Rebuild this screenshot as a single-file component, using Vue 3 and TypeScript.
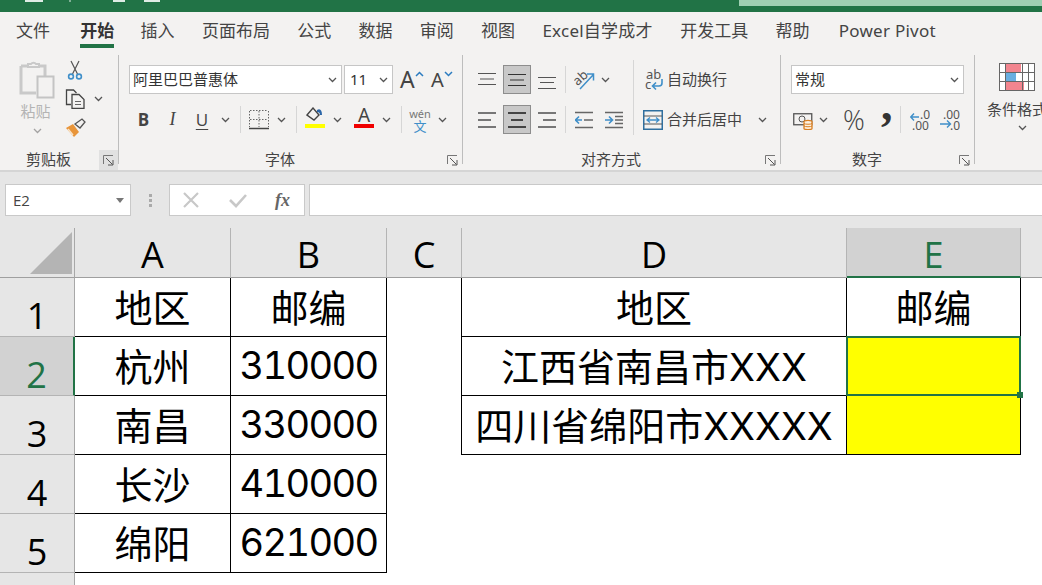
<script setup lang="ts">
type Cell = { text?: string; cls?: string }

const tabs = ['文件', '开始', '插入', '页面布局', '公式', '数据', '审阅', '视图', 'Excel自学成才', '开发工具', '帮助', 'Power Pivot']

const columns = [
  { name: 'A', width: 156 },
  { name: 'B', width: 156 },
  { name: 'C', width: 75 },
  { name: 'D', width: 385 },
  { name: 'E', width: 174 },
]

const b = 'line'
const n = 'line num'
const rows: { no: number; cells: Cell[] }[] = [
  { no: 1, cells: [{ text: '地区', cls: b }, { text: '邮编', cls: b }, { cls: 'edge' }, { text: '地区', cls: b }, { text: '邮编', cls: b }] },
  { no: 2, cells: [{ text: '杭州', cls: b }, { text: '310000', cls: n }, { cls: 'edge' }, { text: '江西省南昌市XXX', cls: b }, { cls: 'line fill picked' }] },
  { no: 3, cells: [{ text: '南昌', cls: b }, { text: '330000', cls: n }, { cls: 'edge' }, { text: '四川省绵阳市XXXXX', cls: b }, { cls: 'line fill' }] },
  { no: 4, cells: [{ text: '长沙', cls: b }, { text: '410000', cls: n }, {}, {}, {}] },
  { no: 5, cells: [{ text: '绵阳', cls: b }, { text: '621000', cls: n }, {}, {}, {}] },
]

const gridColumns = ['75px', ...columns.map((c) => c.width + 'px'), '1fr'].join(' ')
</script>

<template>
  <div class="app">
    <svg width="0" height="0" class="defs">
      <symbol id="chev" viewBox="0 0 9 6"><path d="M1 1l3.5 3.5L8 1" fill="none" stroke="#555" stroke-width="1.3" /></symbol>
      <symbol id="launch" viewBox="0 0 11 11">
        <path d="M.5 9V.5H10" fill="none" stroke="#777" />
        <path d="M3 3l6.5 6.5M5 10h5V5" fill="none" stroke="#555" />
      </symbol>
    </svg>

    <div class="titlebar">
      <div class="quick"><i class="q1"></i><i class="q2"></i><i class="q3"></i><i class="q4"></i></div>
      <div class="title-search"></div>
    </div>

    <nav class="tabs">
      <span v-for="t in tabs" :key="t" class="tab" :class="{ active: t === '开始', latin: /^[A-Z]/.test(t) }">{{ t }}</span>
    </nav>

    <div class="ribbon">
      <!-- clipboard -->
      <section class="group g-clip">
        <div class="body clip-body">
          <div class="paste">
            <svg width="36" height="39" viewBox="0 0 36 39">
              <path d="M2 6h7M20 6h6v10M2 6v27h15" fill="none" stroke="#c9c9c9" stroke-width="3" />
              <path d="M9 7V4h3a3 3 0 0 1 5 0h3v3z" fill="#f3f2f1" stroke="#c9c9c9" stroke-width="2" />
              <rect x="18.5" y="16.5" width="16" height="21" fill="#f3f2f1" stroke="#c4c4c4" stroke-width="2" />
            </svg>
            <span class="paste-label">粘贴</span>
            <svg class="paste-chev" width="9" height="6"><use href="#chev" /></svg>
          </div>
          <div class="clip-tools">
            <svg width="20" height="20" viewBox="0 0 20 20">
              <path d="M6 1l6.5 13M14 1L7.500 14" fill="none" stroke="#555" stroke-width="1.2" />
              <circle cx="6" cy="16.500" r="2.400" fill="none" stroke="#3f8fc9" stroke-width="1.600" />
              <circle cx="14" cy="16.500" r="2.400" fill="none" stroke="#3f8fc9" stroke-width="1.600" />
            </svg>
            <div class="copy-row">
              <svg width="21" height="20" viewBox="0 0 21 20">
                <path d="M6 15.500H1.500V1h7l3 3" fill="none" stroke="#444" stroke-width="1.300" />
                <path d="M7 5.500h7l5 5v9H7z" fill="#f3f2f1" stroke="#444" stroke-width="1.300" />
                <path d="M10 12.500h6M10 15.500h6" stroke="#666" />
              </svg>
              <svg width="9" height="6"><use href="#chev" /></svg>
            </div>
            <svg width="21" height="20" viewBox="0 0 21 20">
              <path d="M1 10l7-4 6 8-5 5z" fill="#e8953a" />
              <path d="M3 11l5 6" stroke="#f8e3c8" stroke-width="1.500" />
              <path d="M10 6l7-5 3 3-5 6z" fill="#f3f2f1" stroke="#555" stroke-width="1.300" />
            </svg>
          </div>
        </div>
        <div class="label">剪贴板<span class="launcher hot"><svg width="11" height="11"><use href="#launch" /></svg></span></div>
      </section>
      <div class="divider"></div>

      <!-- font -->
      <section class="group g-font">
        <div class="body rows">
          <div class="row">
            <div class="combo font-name"><span>阿里巴巴普惠体</span><svg width="9" height="6"><use href="#chev" /></svg></div>
            <div class="combo font-size"><span>11</span><svg width="9" height="6"><use href="#chev" /></svg></div>
            <span class="grow-a"><b>A</b><svg width="9" height="6" viewBox="0 0 9 6"><path d="M1 5l3.500-3.500L8 5" fill="none" stroke="#2b7cc0" stroke-width="1.500" /></svg></span>
            <span class="shrink-a"><b>A</b><svg width="9" height="6" viewBox="0 0 9 6"><path d="M1 1l3.500 3.500L8 1" fill="none" stroke="#2b7cc0" stroke-width="1.500" /></svg></span>
          </div>
          <div class="row">
            <span class="tool t29 glyph bold">B</span>
            <span class="tool t29 glyph italic">I</span>
            <span class="tool t30 glyph under">U</span>
            <span class="chev"><svg width="9" height="6"><use href="#chev" /></svg></span>
            <i class="sep"></i>
            <span class="tool t28">
              <svg width="20" height="20" viewBox="0 0 20 20">
                <path d="M.5 1v16M10 1v16M19.500 1v16M1 .5h18M1 9.500h18" fill="none" stroke="#666" stroke-dasharray="1.500 1.500" />
                <path d="M0 18.500h20" stroke="#444" stroke-width="1.500" />
              </svg>
            </span>
            <span class="chev"><svg width="9" height="6"><use href="#chev" /></svg></span>
            <i class="sep"></i>
            <span class="tool t28 stack">
              <svg width="20" height="16" viewBox="0 0 20 16">
                <path d="M2 8l6-7 6 7-5 5z" fill="none" stroke="#444" stroke-width="1.400" />
                <path d="M12 3c3-2 5 0 5 5h-2c0-2-1-3-3-3z" fill="#2b66a8" />
              </svg>
              <i class="colorbar yellow"></i>
            </span>
            <span class="chev"><svg width="9" height="6"><use href="#chev" /></svg></span>
            <span class="tool t28 stack ml5">
              <span class="font-a">A</span>
              <i class="colorbar red"></i>
            </span>
            <span class="chev"><svg width="9" height="6"><use href="#chev" /></svg></span>
            <i class="sep"></i>
            <span class="tool t28 wen"><small>wén</small><em>文</em></span>
            <span class="chev"><svg width="9" height="6"><use href="#chev" /></svg></span>
          </div>
        </div>
        <div class="label">字体<span class="launcher"><svg width="11" height="11"><use href="#launch" /></svg></span></div>
      </section>
      <div class="divider"></div>

      <!-- alignment -->
      <section class="group g-align">
        <div class="body align-body">
          <div class="rows">
            <div class="row">
              <span class="tool t26"><svg width="18" height="20" viewBox="0 0 18 20"><path d="M0 4.500h18M2 10h14M0 15.500h18" stroke="#555" transform="translate(0 -1)" /></svg></span>
              <span class="tool t28 on"><svg width="18" height="20" viewBox="0 0 18 20"><path d="M0 4.500h18M2 10h14M0 15.500h18" stroke="#333" /></svg></span>
              <span class="tool t27"><svg width="18" height="20" viewBox="0 0 18 20"><path d="M0 7.500h18M2 12.500h14M0 18.500h18" stroke="#555" /></svg></span>
              <i class="sep tight"></i>
              <span class="tool t30">
                <svg width="21" height="22" viewBox="0 0 21 22">
                  <text x="0" y="14" transform="rotate(-42 6 11)" class="svg-ab">ab</text>
                  <path d="M6 20L19 6M13 5h6.500v6.500" fill="none" stroke="#3f8fc9" stroke-width="1.500" />
                </svg>
              </span>
              <span class="chev narrow"><svg width="9" height="6"><use href="#chev" /></svg></span>
            </div>
            <div class="row">
              <span class="tool t26"><svg width="18" height="20" viewBox="0 0 18 20"><path d="M0 3h18M0 10h13M0 17h18" stroke="#777" stroke-width="2" /></svg></span>
              <span class="tool t28 on"><svg width="18" height="20" viewBox="0 0 18 20"><path d="M0 3h18M3 10h12M0 17h18" stroke="#444" stroke-width="2" /></svg></span>
              <span class="tool t27"><svg width="18" height="20" viewBox="0 0 18 20"><path d="M0 3h18M5 10h13M0 17h18" stroke="#777" stroke-width="2" /></svg></span>
              <i class="sep tight"></i>
              <span class="tool t30">
                <svg width="18" height="18" viewBox="0 0 18 18">
                  <path d="M0 1.500h18M9 9h9M0 16.500h18" stroke="#666" stroke-width="1.500" />
                  <path d="M7 9H1M4 5.500L.5 9 4 12.500" fill="none" stroke="#3f8fc9" stroke-width="1.600" />
                </svg>
              </span>
              <span class="tool t30">
                <svg width="18" height="18" viewBox="0 0 18 18">
                  <path d="M0 1.500h18M10 5.500h8M10 9h8M10 12.500h8M0 16.500h18" stroke="#666" stroke-width="1.300" />
                  <path d="M0 9h7M4 5.500L7.500 9 4 12.500" fill="none" stroke="#3f8fc9" stroke-width="1.600" />
                </svg>
              </span>
            </div>
          </div>
          <i class="vsep"></i>
          <div class="rows cmds">
            <div class="row cmd">
              <svg width="19" height="22" viewBox="0 0 19 22">
                <text x="1" y="10" class="svg-ab">ab</text>
                <text x="0" y="20" class="svg-ab">c</text>
                <path d="M17 10v4a3 3 0 0 1-3 3H8M11 13.500L7.500 17l3.500 3.500" fill="none" stroke="#3f8fc9" stroke-width="1.600" />
              </svg>
              <span>自动换行</span>
            </div>
            <div class="row cmd merge">
              <svg width="20" height="20" viewBox="0 0 20 20">
                <rect x=".75" y=".75" width="18.500" height="18.500" fill="#f3f2f1" stroke="#2f6f9f" stroke-width="1.500" />
                <path d="M1 6h18M1 14h18" stroke="#555" />
                <path d="M4 10h12M7 7.500L4 10l3 2.500M13 7.500l3 2.500-3 2.500" fill="none" stroke="#3f8fc9" stroke-width="1.300" />
              </svg>
              <span>合并后居中</span>
              <svg class="merge-chev" width="9" height="6"><use href="#chev" /></svg>
            </div>
          </div>
        </div>
        <div class="label">对齐方式<span class="launcher"><svg width="11" height="11"><use href="#launch" /></svg></span></div>
      </section>
      <div class="divider"></div>

      <!-- number -->
      <section class="group g-number">
        <div class="body rows">
          <div class="row">
            <div class="combo number-format"><span>常规</span><svg width="9" height="6"><use href="#chev" /></svg></div>
          </div>
          <div class="row">
            <span class="tool t24">
              <svg width="21" height="20" viewBox="0 0 21 20">
                <rect x=".75" y="3.750" width="18" height="11" fill="#f3f2f1" stroke="#555" stroke-width="1.300" />
                <circle cx="9" cy="9" r="3" fill="none" stroke="#555" />
                <path d="M11 11.500c0-1.500 8-1.500 8 0v7c0 1.500-8 1.500-8 0z" fill="#fdf1e0" stroke="#d97f22" stroke-width="1.300" />
                <path d="M11 13.500c1 1 7 1 8 0M11 16c1 1 7 1 8 0" fill="none" stroke="#d97f22" />
              </svg>
            </span>
            <span class="chev"><svg width="9" height="6"><use href="#chev" /></svg></span>
            <span class="percent">%</span>
            <svg class="comma" width="13" height="22" viewBox="0 0 13 22"><text x="0" y="11" class="svg-comma">,</text></svg>
            <i class="sep wide"></i>
            <span class="tool t30">
              <svg width="20" height="20" viewBox="0 0 20 20">
                <text x="10" y="9" class="svg-dec">.0</text>
                <text x="2" y="20" class="svg-dec">.00</text>
                <path d="M9 7H1M4 3.500L.8 7 4 10.500" fill="none" stroke="#3f8fc9" stroke-width="1.400" />
              </svg>
            </span>
            <span class="tool t30">
              <svg width="20" height="20" viewBox="0 0 20 20">
                <text x="3" y="9" class="svg-dec">.00</text>
                <text x="10" y="20" class="svg-dec">.0</text>
                <path d="M0 14h10M7 10.500l3.500 3.500L7 17.500" fill="none" stroke="#3f8fc9" stroke-width="1.400" />
              </svg>
            </span>
          </div>
        </div>
        <div class="label">数字<span class="launcher"><svg width="11" height="11"><use href="#launch" /></svg></span></div>
      </section>
      <div class="divider"></div>

      <!-- styles, cut off by the window -->
      <section class="group g-style">
        <div class="body style-body">
          <svg width="36" height="28" viewBox="0 0 36 28">
            <rect x=".5" y=".5" width="35" height="27" fill="#fff" stroke="#666" />
            <rect x="7" y="1" width="15" height="8" fill="#f2858f" />
            <rect x="7" y="10" width="10" height="8" fill="#6aaee0" />
            <rect x="7" y="19" width="18" height="8" fill="#f2858f" />
            <path d="M6.500 0v28M23.500 0v28M29.500 0v28M0 9.500h36M0 18.500h36" stroke="#666" />
          </svg>
          <span>条件格式</span>
          <svg width="9" height="6"><use href="#chev" /></svg>
        </div>
      </section>
    </div>

    <div class="formula">
      <div class="namebox"><span>E2</span><i class="tri"></i></div>
      <div class="dots"><i></i><i></i><i></i></div>
      <div class="fx-box">
        <svg width="18" height="16" viewBox="0 0 18 16"><path d="M2 1l14 14M16 1L2 15" stroke="#c8c8c8" stroke-width="2.200" /></svg>
        <svg width="18" height="16" viewBox="0 0 18 16"><path d="M1 8l6 6L17 3" fill="none" stroke="#c8c8c8" stroke-width="2.600" /></svg>
        <span class="fx">fx</span>
      </div>
      <div class="fx-input"></div>
    </div>

    <div class="sheet" :style="{ gridTemplateColumns: gridColumns }">
      <div class="corner">
        <svg width="42" height="42" viewBox="0 0 42 42"><path d="M42 0v42H0z" fill="#b4b4b4" /></svg>
      </div>
      <div v-for="c in columns" :key="c.name" class="col-head" :class="{ current: c.name === 'E' }">{{ c.name }}</div>
      <div class="col-rest"></div>

      <template v-for="r in rows" :key="r.no">
        <div class="row-head" :class="{ current: r.no === 2 }">{{ r.no }}</div>
        <div v-for="(cell, i) in r.cells" :key="i" class="cell" :class="cell.cls">
          {{ cell.text }}
          <template v-if="cell.cls?.includes('picked')"><i class="handle"></i></template>
        </div>
        <div></div>
      </template>
      <div class="row-head last"></div>
    </div>
  </div>
</template>

<style>
html,
body {
  margin: 0;
  overflow: hidden;
  background: #fff;
}
</style>

<style scoped>
.app {
  width: 1042px;
  height: 585px;
  overflow: hidden;
  display: flex;
  flex-direction: column;
  font-family: "Noto Sans", "Noto Sans CJK SC", sans-serif;
  color: #444;
}
.defs {
  position: absolute;
}
.titlebar {
  height: 12px;
  flex: none;
  background: #217346;
  display: flex;
  justify-content: space-between;
}
.quick {
  display: flex;
  padding-left: 25px;
}
.quick i {
  height: 2px;
  background: #dfece5;
}
.q1 { width: 18px; }
.q2 { width: 2px; margin-left: 26px; opacity: 0.5; }
.q3 { width: 12px; margin-left: 42px; }
.q4 { width: 16px; margin-left: 19px; }
.title-search {
  width: 303px;
  height: 6px;
  background: #9fcfb3;
}
.tabs {
  height: 38px;
  flex: none;
  box-sizing: border-box;
  background: #f3f2f1;
  display: flex;
  gap: 27.3px;
  padding-left: 16px;
  font-size: 17px;
  line-height: 38px;
}
.tab {
  position: relative;
  white-space: nowrap;
}
.tab.latin {
  letter-spacing: 0.25px;
}
.tab.latin:last-child {
  margin-left: 2px;
}
.tab.active {
  font-weight: 700;
  color: #333;
  margin: 0 -1px 0 3px;
}
.tab.active::after {
  content: "";
  position: absolute;
  left: 0;
  right: 0;
  top: 32px;
  height: 4px;
  background: #217346;
}
.ribbon {
  height: 122px;
  flex: none;
  box-sizing: border-box;
  background: #f3f2f1;
  border-bottom: 2px solid #d5d5d5;
  display: flex;
}
.group {
  display: flex;
  flex-direction: column;
  flex: none;
  position: relative;
}
.g-clip { width: 118px; }
.g-font { width: 343px; }
.g-align { width: 317px; }
.g-number { width: 193px; }
.g-style { flex: 1; min-width: 0; overflow: hidden; }
.divider {
  flex: none;
  width: 1px;
  margin: 5px 0 6px;
  background: #bdbdbd;
}
.body {
  height: 100px;
  box-sizing: border-box;
}
.label {
  height: 20px;
  line-height: 19px;
  font-size: 15px;
  text-align: center;
  padding-right: 21px;
}
.launcher {
  position: absolute;
  right: 4px;
  bottom: 4px;
  display: flex;
}
.launcher.hot {
  right: 0;
  bottom: 0;
  width: 19px;
  height: 20px;
  background: #e1e1e1;
  align-items: center;
  justify-content: center;
}
.clip-body {
  display: flex;
  padding: 10px 0 0 19px;
}
.paste {
  width: 36px;
  display: flex;
  flex-direction: column;
  align-items: center;
}
.paste-label {
  font-size: 15px;
  line-height: 20px;
  margin: 2px 3px 0 0;
  color: #b4b4b4;
  white-space: nowrap;
}
.paste-chev {
  margin-top: 7px;
  opacity: 0.5;
}
.clip-tools {
  margin-left: 10px;
  display: flex;
  flex-direction: column;
  gap: 9px;
}
.copy-row {
  display: flex;
  align-items: center;
  gap: 8px;
}
.rows {
  display: flex;
  flex-direction: column;
  gap: 11px;
  padding-top: 15px;
}
.g-font .rows { padding-left: 10px; }
.row {
  height: 29px;
  display: flex;
  align-items: center;
}
.combo {
  box-sizing: border-box;
  height: 29px;
  background: #fff;
  border: 1px solid #c6c6c6;
  display: flex;
  align-items: center;
  justify-content: space-between;
  padding: 0 4px 0 3px;
  font-size: 15px;
  color: #333;
}
.combo span,
.cmd span {
  padding-bottom: 2px;
}
.font-name { width: 213px; }
.font-size { width: 49px; margin-left: 2px; padding-left: 5px; }
.number-format { width: 173px; padding-left: 3px; }
.grow-a,
.shrink-a {
  display: flex;
  align-items: flex-start;
  font-family: "Noto Sans", sans-serif;
}
.grow-a b,
.shrink-a b {
  font-weight: 400;
  line-height: 29px;
}
.grow-a svg,
.shrink-a svg {
  margin-top: 6px;
}
.grow-a {
  margin-left: 7px;
  font-size: 23px;
  width: 31px;
}
.shrink-a {
  font-size: 20px;
}
.tool {
  height: 29px;
  box-sizing: border-box;
  display: flex;
  align-items: center;
  justify-content: center;
  flex: none;
}
.t24 { width: 24px; }
.t26 { width: 26px; }
.t27 { width: 27px; margin-left: 2px; }
.t28 { width: 28px; }
.t29 { width: 29px; }
.t30 { width: 30px; }
.ml5 { margin-left: 5px; }
.on {
  margin-left: 3px;
  background: #c8c8c8;
  border: 1px solid #8d8d8d;
}
.chev {
  width: 16px;
  flex: none;
  display: flex;
  justify-content: center;
}
.chev.narrow { width: 12px; }
.sep {
  width: 1px;
  height: 27px;
  flex: none;
  margin: 0 4px 0 7px;
  background: #d6d6d6;
}
.sep.tight { margin: 0 3px 0 5px; }
.sep.wide { margin: 0 4px 0 6px; }
.glyph {
  font-size: 17px;
  color: #444;
}
.bold {
  font-family: "Open Sans", sans-serif;
  font-weight: 700;
}
.italic {
  font-family: "Liberation Serif", serif;
  font-style: italic;
  font-size: 18px;
}
.under {
  font-family: "Open Sans", sans-serif;
  text-decoration: underline;
  text-underline-offset: 3px;
}
.stack {
  flex-direction: column;
  justify-content: flex-start;
  padding-top: 2px;
}
.colorbar {
  width: 20px;
  height: 4px;
  flex: none;
}
.yellow { background: #ffff00; margin-top: 1px; }
.red { background: #f00000; }
.font-a {
  height: 17px;
  line-height: 16px;
  font-size: 19px;
  font-family: "Noto Sans", sans-serif;
}
.wen {
  flex-direction: column;
  line-height: 1;
}
.wen small {
  font-size: 11px;
  color: #777;
  line-height: 13px;
}
.wen em {
  font-style: normal;
  font-size: 13px;
  line-height: 13px;
  color: #3f8fc9;
}
.align-body {
  display: flex;
  padding-left: 11px;
}
.vsep {
  width: 1px;
  flex: none;
  height: 75px;
  margin: 10px 0 0 4px;
  background: #d6d6d6;
}
.svg-ab {
  font: 13px "Noto Sans", sans-serif;
  fill: #555;
}
.svg-dec {
  font: 12px "Noto Sans", sans-serif;
  fill: #555;
}
.svg-comma {
  font: 700 46px "Liberation Serif", serif;
  fill: #333;
}
.cmds {
  padding-left: 9px;
}
.cmd {
  font-size: 15px;
  gap: 3px;
  padding-left: 2px;
  white-space: nowrap;
}
.merge {
  padding-left: 0;
  gap: 4px;
}
.merge-chev {
  margin-left: 12px;
}
.g-number .rows {
  padding-left: 10px;
}
.percent {
  margin-left: 10px;
  width: 26px;
  text-align: center;
  font: 300 27px/29px "Open Sans", sans-serif;
}
.comma {
  flex: none;
  margin-left: 14px;
}
.formula {
  height: 56px;
  flex: none;
  box-sizing: border-box;
  background: #e6e6e6;
  display: flex;
  padding: 12px 0 0 5px;
}
.namebox,
.fx-box,
.fx-input {
  height: 32px;
  box-sizing: border-box;
  background: #fff;
  border: 1px solid #c9c9c9;
  flex: none;
}
.namebox {
  width: 126px;
  display: flex;
  align-items: center;
  justify-content: space-between;
  padding: 0 6px 0 7px;
  font: 15px "Open Sans", sans-serif;
}
.tri {
  border: 4px solid transparent;
  border-top: 5px solid #777;
  border-bottom: 0;
}
.dots {
  width: 38px;
  height: 32px;
  flex: none;
  display: flex;
  flex-direction: column;
  align-items: center;
  justify-content: center;
  gap: 2px;
}
.dots i {
  width: 3px;
  height: 3px;
  background: #aaa;
}
.fx-box {
  width: 136px;
  display: flex;
  align-items: center;
  justify-content: space-between;
  padding: 0 14px 0 12px;
  gap: 28px;
}
.fx {
  font: italic 700 18px "Liberation Serif", serif;
  color: #666;
}
.fx-input {
  margin-left: 4px;
  flex: 1;
  border-right: 0;
}
.sheet {
  flex: 1;
  display: grid;
  grid-template-rows: 50px repeat(5, 59px) 1fr;
  background: #fff;
  color: #000;
}
.corner {
  background: #e6e6e6;
  box-sizing: border-box;
  border-right: 1px solid #a8a8a8;
  border-bottom: 1px solid #9f9f9f;
  display: flex;
  align-items: flex-end;
  justify-content: flex-end;
  padding: 0 2px 3px 0;
}
.col-head,
.col-rest {
  background: #e6e6e6;
  box-sizing: border-box;
  border-right: 1px solid #b4b4b4;
  border-bottom: 1px solid #9f9f9f;
  text-align: center;
  font: 36px/54px "Open Sans", "Noto Sans", sans-serif;
}
.col-rest {
  border-right: 0;
}
.col-head.current {
  background: #d2d2d2;
  color: #217346;
  border-bottom: 2px solid #217346;
}
.row-head {
  background: #e6e6e6;
  box-sizing: border-box;
  border-right: 1px solid #a8a8a8;
  border-bottom: 1px solid #b4b4b4;
  text-align: center;
  font: 36px/76px "Open Sans", "Noto Sans", sans-serif;
  overflow: hidden;
}
.row-head.current {
  background: #d2d2d2;
  color: #217346;
  border-right: 2px solid #217346;
}
.row-head.last {
  border-bottom: 0;
}
.cell {
  position: relative;
  box-sizing: border-box;
  display: flex;
  align-items: center;
  justify-content: center;
  padding-bottom: 3px;
  white-space: nowrap;
  font-family: Inter, "Noto Sans CJK SC", sans-serif;
  font-size: 38px;
}
.cell.num {
  font-variant-numeric: tabular-nums;
  letter-spacing: -1.6px;
}
.cell.line {
  border-right: 1px solid #000;
  border-bottom: 1px solid #000;
}
.cell.edge {
  border-right: 1px solid #000;
}
.cell.fill {
  background: #ffff00;
}
.cell.picked::before {
  content: "";
  position: absolute;
  left: -1px;
  top: -1px;
  right: -1px;
  bottom: -1px;
  border: 2px solid #217346;
}
.handle {
  position: absolute;
  right: -3px;
  bottom: -3px;
  width: 6px;
  height: 6px;
  background: #217346;
  z-index: 2;
}
.style-body {
  padding: 13px 0 0 12px;
  display: flex;
  flex-direction: column;
  align-items: flex-start;
  font-size: 15px;
  white-space: nowrap;
}
.style-body svg:first-child {
  margin-left: 12px;
}
.style-body span {
  margin-top: 7px;
  line-height: 22px;
}
.style-body svg:last-child {
  margin: 5px 0 0 31px;
}
</style>
